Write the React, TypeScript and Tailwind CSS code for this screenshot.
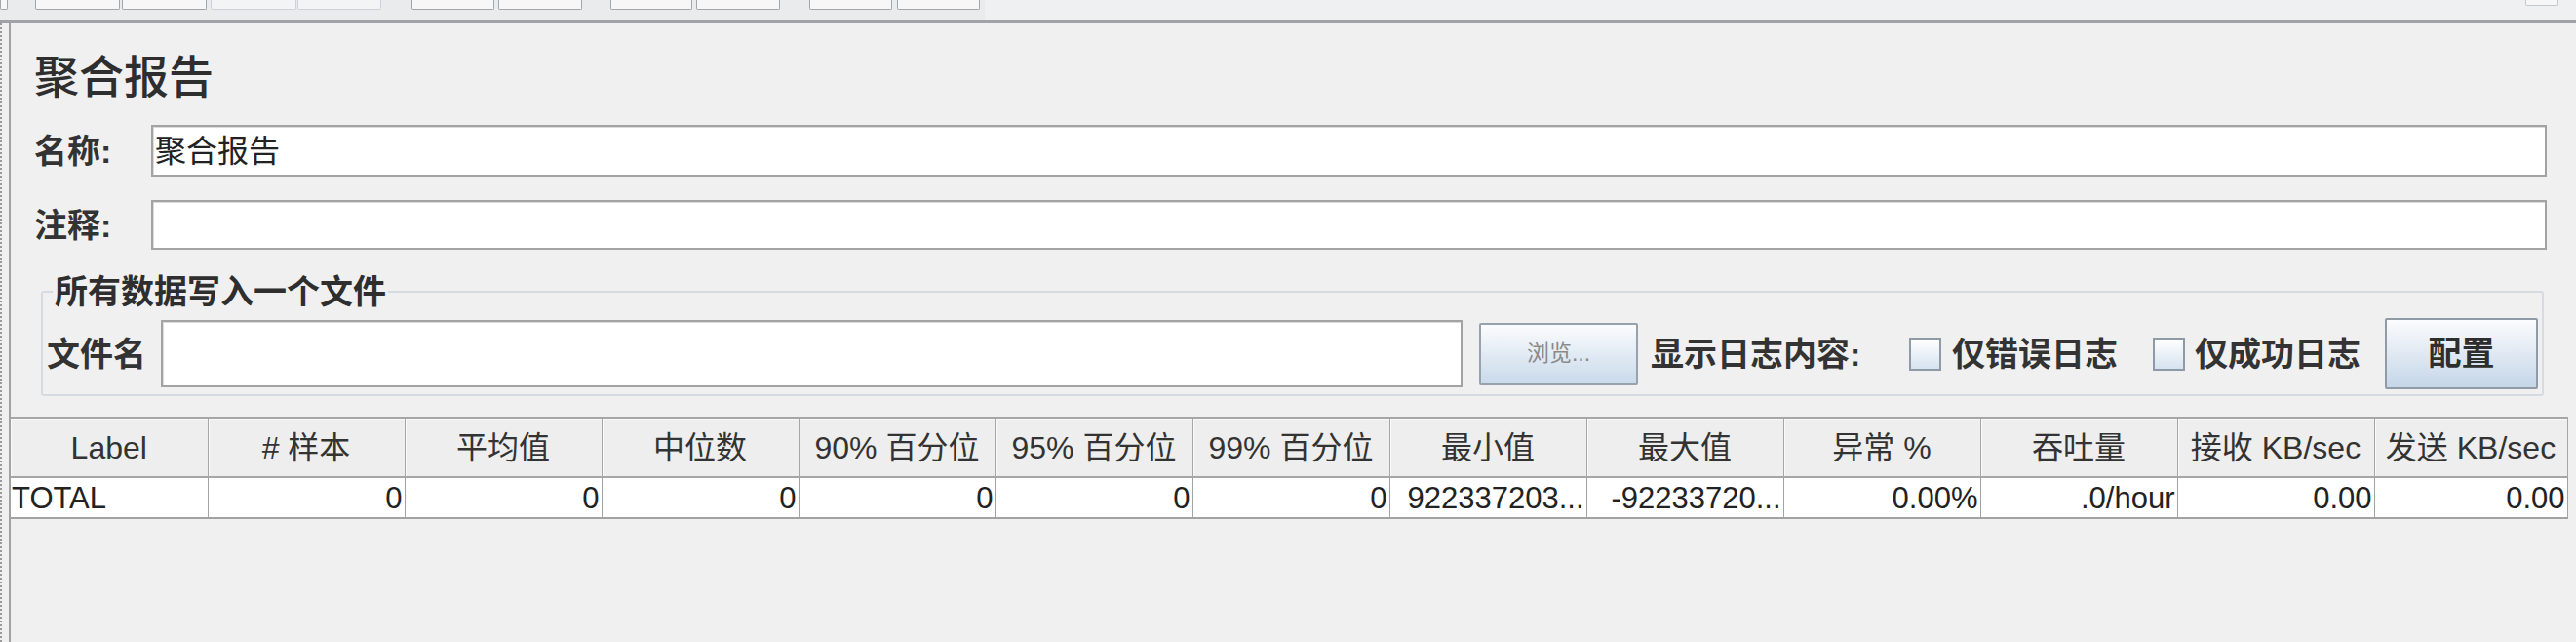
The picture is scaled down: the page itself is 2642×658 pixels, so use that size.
import React from "react";

const cols = [
  "Label",
  "# 样本",
  "平均值",
  "中位数",
  "90% 百分位",
  "95% 百分位",
  "99% 百分位",
  "最小值",
  "最大值",
  "异常 %",
  "吞吐量",
  "接收 KB/sec",
  "发送 KB/sec",
];

const row = [
  "TOTAL",
  "0",
  "0",
  "0",
  "0",
  "0",
  "0",
  "922337203...",
  "-92233720...",
  "0.00%",
  ".0/hour",
  "0.00",
  "0.00",
];

const font = { fontFamily: '"Liberation Sans", "Noto Sans CJK SC", sans-serif' };

function ToolBtn({ w, faded }: { w: string; faded?: boolean }) {
  return (
    <div
      className={`h-[10px] ${w} border-x border-b border-[#a4a7aa] rounded-b-[2px] ${
        faded ? "bg-[#f3f4f5] border-[#cfd2d5]" : "bg-[#f7f7f7]"
      }`}
    />
  );
}

export default function App() {
  return (
    <div className="w-[2642px] h-[658px] bg-[#f0f0f0] flex flex-col overflow-hidden text-[#333]" style={font}>
      {/* top toolbar, cut off */}
      <div className="h-[20px] bg-[#eef0f2] flex items-start">
        <div className="flex items-start w-[1010px] h-[20px] bg-[#e9ebed]">
          <ToolBtn w="w-[8px]" />
          <div className="w-[28px]" />
          <ToolBtn w="w-[87px]" />
          <div className="w-[2px]" />
          <ToolBtn w="w-[87px]" />
          <div className="w-[4px]" />
          <ToolBtn w="w-[88px]" faded />
          <div className="w-[1px]" />
          <ToolBtn w="w-[86px]" faded />
          <div className="w-[31px]" />
          <ToolBtn w="w-[85px]" />
          <div className="w-[4px]" />
          <ToolBtn w="w-[86px]" />
          <div className="w-[29px]" />
          <ToolBtn w="w-[84px]" />
          <div className="w-[4px]" />
          <ToolBtn w="w-[86px]" />
          <div className="w-[30px]" />
          <ToolBtn w="w-[85px]" />
          <div className="w-[5px]" />
          <ToolBtn w="w-[85px]" />
        </div>
        <div className="flex-1" />
        <div className="h-[6px] w-[34px] mr-[18px] border-x border-b border-[#c4c7ca] rounded-b-[2px] bg-[#f7f7f7]" />
      </div>
      <div className="h-[1px] bg-[#d3d6d9]" />
      <div className="h-[3px] bg-[#9fa3a7]" />

      <div className="flex-1 flex">
        {/* left gutter */}
        <div className="w-[9px] border-l-2 border-dotted border-[#9a9a9a]" />

        <div className="flex-1 flex flex-col border-l-2 border-[#a2a2a2]">
          <div className="pl-[24px] mt-[32px] text-[46px] leading-none font-medium text-[#2e2e2e]">聚合报告</div>

          <div className="flex items-center mt-[26px] pl-[24px] pr-[30px]">
            <div className="w-[120px] text-[34px] leading-none font-bold">名称:</div>
            <div className="flex-1 h-[53px] bg-white border-2 border-[#a3a3a3] shadow-[inset_1px_1px_0_#dcdcdc] flex items-center pl-[2px] text-[32px] text-[#222]">
              聚合报告
            </div>
          </div>

          <div className="flex items-center mt-[24px] pl-[24px] pr-[30px]">
            <div className="w-[120px] text-[34px] leading-none font-bold">注释:</div>
            <div className="flex-1 h-[51px] bg-white border-2 border-[#a3a3a3] shadow-[inset_1px_1px_0_#dcdcdc]" />
          </div>

          <fieldset className="mt-[25px] ml-[31px] mr-[33px] border-2 border-[#d5dbe1] rounded-[3px] px-[4px] pb-[5px]">
            <legend className="ml-[6px] px-[2px] text-[34px] leading-[36px] font-bold text-[#2e2e2e]">
              所有数据写入一个文件
            </legend>
            <div className="flex items-center mt-[9px] h-[73px]">
              <div className="w-[117px] text-[34px] leading-none font-bold">文件名</div>
              <div className="flex-1 h-[69px] bg-white border-2 border-[#a3a3a3] shadow-[inset_1px_1px_0_#dcdcdc]" />
              <div className="ml-[17px] w-[163px] h-[64px] border-2 border-[#97a2ad] rounded-[2px] bg-gradient-to-b from-[#fbfcfd] to-[#c9daeb] flex items-center justify-center text-[23px] text-[#8a8a8a]">
                浏览...
              </div>
              <div className="ml-[13px] w-[252px] text-[34px] leading-none font-bold whitespace-nowrap">显示日志内容:</div>
              <div className="ml-[13px] w-[33px] h-[34px] border-2 border-[#8e9aa6] bg-gradient-to-b from-[#ffffff] to-[#d6e3f0]" />
              <div className="ml-[11px] w-[172px] text-[34px] leading-none font-bold whitespace-nowrap">仅错误日志</div>
              <div className="ml-[34px] w-[33px] h-[34px] border-2 border-[#8e9aa6] bg-gradient-to-b from-[#ffffff] to-[#d6e3f0]" />
              <div className="ml-[10px] w-[170px] text-[34px] leading-none font-bold whitespace-nowrap">仅成功日志</div>
              <div className="ml-[25px] w-[157px] h-[73px] border-2 border-[#8f9ba7] rounded-[2px] bg-gradient-to-b from-[#fbfcfd] to-[#c5d6e8] flex items-center justify-center text-[34px] font-bold text-[#2e2e2e]">
                配置
              </div>
            </div>
          </fieldset>

          <div className="mt-[21px] mr-[8px]">
            <table className="table-fixed border-collapse w-[2622px]">
              <colgroup>
                {cols.map((c, i) => (
                  <col key={c} className={i === cols.length - 1 ? "w-[198px]" : "w-[202px]"} />
                ))}
              </colgroup>
              <thead>
                <tr>
                  {cols.map((c) => (
                    <th
                      key={c}
                      className="h-[61px] p-0 bg-[#eeeeee] border-t-2 border-r border-b-2 border-[#a6a6a6] shadow-[inset_1px_1px_0_#fafafa] text-center text-[32px] font-normal text-[#333] whitespace-nowrap overflow-hidden"
                    >
                      {c}
                    </th>
                  ))}
                </tr>
              </thead>
              <tbody>
                <tr>
                  {row.map((v, i) => (
                    <td
                      key={i}
                      className={`h-[42px] p-0 bg-white border-r border-b-2 border-[#a2a2a2] text-[31px] leading-none text-[#222] whitespace-nowrap overflow-hidden ${
                        i === 0 ? "text-left pl-[1px]" : "text-right pr-[2px]"
                      }`}
                    >
                      {v}
                    </td>
                  ))}
                </tr>
              </tbody>
            </table>
          </div>
        </div>
      </div>
    </div>
  );
}
